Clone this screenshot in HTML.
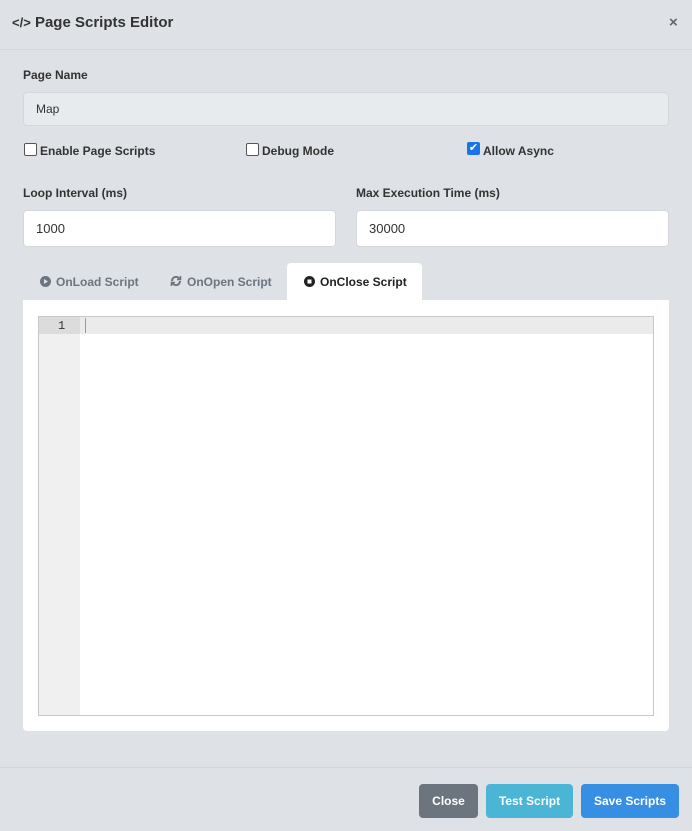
<!DOCTYPE html>
<html><head><style>
*{box-sizing:border-box;margin:0;padding:0}
body{width:692px;height:831px;background:#dee1e6;font-family:"Liberation Sans",sans-serif;color:#333;position:relative;overflow:hidden;font-size:13px}
.a{position:absolute}
.b{font-weight:bold}
.lbl{font-size:12px;font-weight:bold;color:#333}
.inp{background:#fff;border:1px solid #d4d8dd;border-radius:4px;font-size:13px;padding-left:12px;line-height:35px;height:37px}
.cb{width:13px;height:13px;border:1px solid #555;border-radius:2px;background:#fff}
.btn{height:34px;line-height:34px;border-radius:4px;color:#fff;font-weight:bold;font-size:12px;text-align:center}
.tab{font-size:12px;font-weight:bold;color:#6c757d}
</style></head><body>
<div class="a b" style="left:12px;top:14px;font-size:15px;color:#333"><span style="font-size:13px">&lt;/&gt;</span> Page Scripts Editor</div>
<div class="a b" style="left:669px;top:14px;font-size:15px;color:#666">×</div>
<div class="a" style="left:0;top:49px;width:692px;height:1px;background:#d3d6db"></div>
<div class="a lbl" style="left:23px;top:68px">Page Name</div>
<div class="a inp" style="left:23px;top:92px;width:646px;height:34px;line-height:32px;background:#e8ebee;font-size:12px">Map</div>
<div class="a cb" style="left:24px;top:143px"></div><div class="a lbl" style="left:40px;top:144px">Enable Page Scripts</div>
<div class="a cb" style="left:246px;top:143px"></div><div class="a lbl" style="left:262px;top:144px">Debug Mode</div>
<div class="a cb" style="left:467px;top:142px;background:#1a73e8;border-color:#1a73e8;color:#fff;font-size:11px;line-height:11px;text-align:center">✔</div><div class="a lbl" style="left:483px;top:144px">Allow Async</div>
<div class="a lbl" style="left:23px;top:186px">Loop Interval (ms)</div>
<div class="a inp" style="left:23px;top:210px;width:313px">1000</div>
<div class="a lbl" style="left:356px;top:186px">Max Execution Time (ms)</div>
<div class="a inp" style="left:356px;top:210px;width:313px">30000</div>
<svg class="a" style="left:40px;top:276px" width="11" height="11" viewBox="0 0 11 11"><circle cx="5.5" cy="5.5" r="5.5" fill="#6c757d"/><path d="M4 3L8 5.5L4 8Z" fill="#dee1e6"/></svg>
<div class="a tab" style="left:56px;top:275px">OnLoad Script</div>
<svg class="a" style="left:170px;top:275px" width="12" height="12" viewBox="0 0 12 12" fill="none" stroke="#6c757d" stroke-width="2"><path d="M2 6A4 4 0 0 1 9.5 4M10 6A4 4 0 0 1 2.5 8"/><path d="M10.5 1V4.5H7M1.5 11V7.5H5" stroke-width="1.6"/></svg>
<div class="a tab" style="left:187px;top:275px">OnOpen Script</div>
<div class="a" style="left:287px;top:263px;width:135px;height:40px;background:#fff;border-radius:4px 4px 0 0"></div>
<svg class="a" style="left:304px;top:276px" width="11" height="11" viewBox="0 0 11 11"><circle cx="5.5" cy="5.5" r="5.5" fill="#222"/><rect x="3.5" y="3.5" width="4" height="4" fill="#fff"/></svg>
<div class="a tab" style="left:320px;top:275px;color:#222">OnClose Script</div>
<div class="a" style="left:23px;top:300px;width:646px;height:431px;background:#fff;border-radius:0 0 4px 4px"></div>
<div class="a" style="left:38px;top:316px;width:616px;height:400px;border:1px solid #c8c8c8;background:#fff"></div>
<div class="a" style="left:39px;top:317px;width:41px;height:398px;background:#f0f0f0"></div>
<div class="a" style="left:39px;top:317px;width:41px;height:17px;background:#dcdcdc"></div>
<div class="a" style="left:80px;top:317px;width:573px;height:17px;background:#ebebeb"></div>
<div class="a" style="left:85px;top:318px;width:1px;height:15px;background:#999"></div>
<div class="a" style="left:58px;top:319px;font-family:'Liberation Mono',monospace;font-size:12px;color:#333">1</div>
<div class="a" style="left:0;top:767px;width:692px;height:1px;background:#d3d6db"></div>
<div class="a btn" style="left:419px;top:784px;width:59px;background:#6c757d">Close</div>
<div class="a btn" style="left:486px;top:784px;width:87px;background:#4ab5d4">Test Script</div>
<div class="a btn" style="left:581px;top:784px;width:98px;background:#368fe3">Save Scripts</div>
</body></html>
